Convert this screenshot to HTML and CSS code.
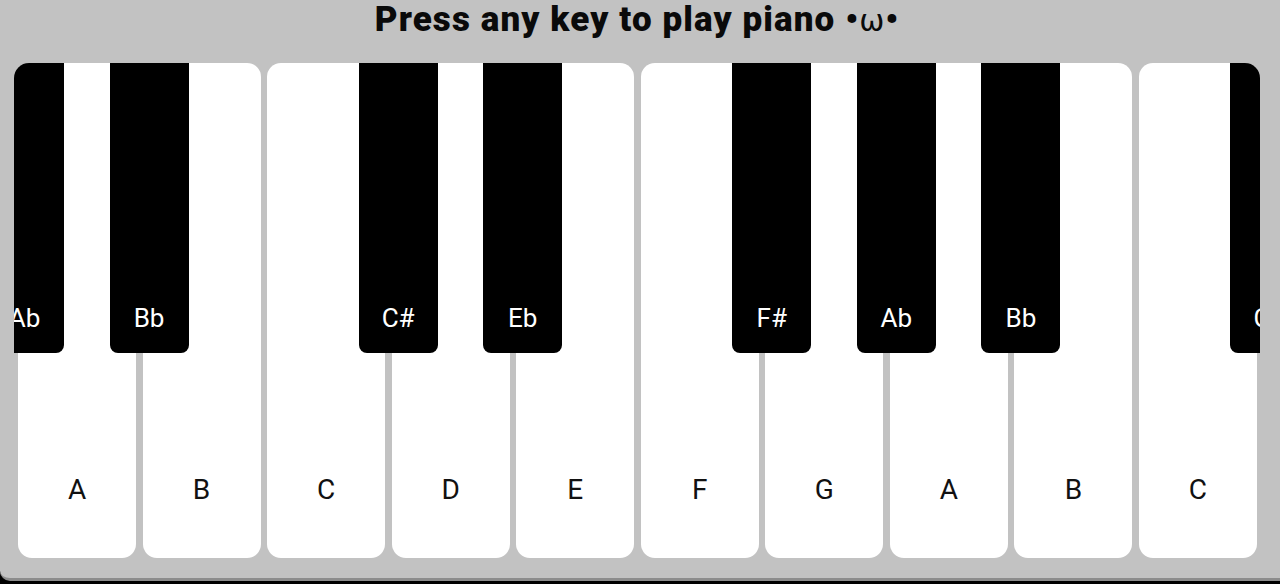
FILE: index.html
```html
<!DOCTYPE html>
<html lang="en">
<head>
<meta charset="utf-8">
<title>Piano</title>
<link rel="stylesheet" href="styles.css">
</head>
<body>
<div class="app">
  <h1 class="title">Press any key to play piano <span class="face">•<span class="omega">ω</span>•</span></h1>
  <div class="keyboard">
    <div class="white"><div class="black"><span>Ab</span></div><span class="wlabel">A</span></div>
    <div class="white"><div class="black"><span>Bb</span></div><span class="wlabel">B</span></div>
    <div class="white"><span class="wlabel">C</span></div>
    <div class="white"><div class="black"><span>C#</span></div><span class="wlabel">D</span></div>
    <div class="white"><div class="black"><span>Eb</span></div><span class="wlabel">E</span></div>
    <div class="white"><span class="wlabel">F</span></div>
    <div class="white"><div class="black"><span>F#</span></div><span class="wlabel">G</span></div>
    <div class="white"><div class="black"><span>Ab</span></div><span class="wlabel">A</span></div>
    <div class="white"><div class="black"><span>Bb</span></div><span class="wlabel">B</span></div>
    <div class="white"><span class="wlabel">C</span><div class="black trailing"><span>C#</span></div></div>
  </div>
</div>
</body>
</html>
```

FILE: styles.css
```css
html, body {
  margin: 0;
  padding: 0;
  height: 100%;
}
body {
  background: #000;
  font-family: Roboto, "Liberation Sans", sans-serif;
  overflow: hidden;
}
.app {
  height: 578px;
  background: #c2c2c2;
  border-bottom: 3px solid #8c8c8c;
  border-bottom-left-radius: 10px;
  display: flex;
  flex-direction: column;
  padding: 0 20px 0 14px;
}
.title {
  margin: 0;
  height: 63px;
  line-height: 40px;
  font-size: 35px;
  font-weight: 900;
  letter-spacing: 1.1px;
  color: #0a0a0a;
  text-align: center;
}
.face {
  letter-spacing: 1px;
}
.omega {
  font-weight: 400;
  font-family: "DejaVu Sans", sans-serif;
  font-size: 30px;
}
.keyboard {
  display: flex;
  gap: 6.5px;
  padding: 0 3px 0 4px;
  height: 495px;
  border-radius: 15px 15px 0 0;
  overflow: hidden;
  position: relative;
}
.white {
  flex: 1;
  position: relative;
  background: #fff;
  border-radius: 14px;
  display: flex;
  flex-direction: column;
  justify-content: flex-end;
  align-items: center;
}
.wlabel {
  font-size: 28px;
  color: #111;
  line-height: 30px;
  margin-bottom: 53px;
}
.black {
  position: absolute;
  top: 0;
  left: -33px;
  width: 79px;
  height: 290px;
  background: #000;
  border-radius: 0 0 8px 8px;
  z-index: 2;
  display: flex;
  justify-content: center;
  align-items: flex-end;
}
.black.trailing {
  left: calc(100% - 26.5px);
}
.black span {
  color: #fff;
  font-size: 26px;
  line-height: 30px;
  margin-bottom: 20px;
}
```
